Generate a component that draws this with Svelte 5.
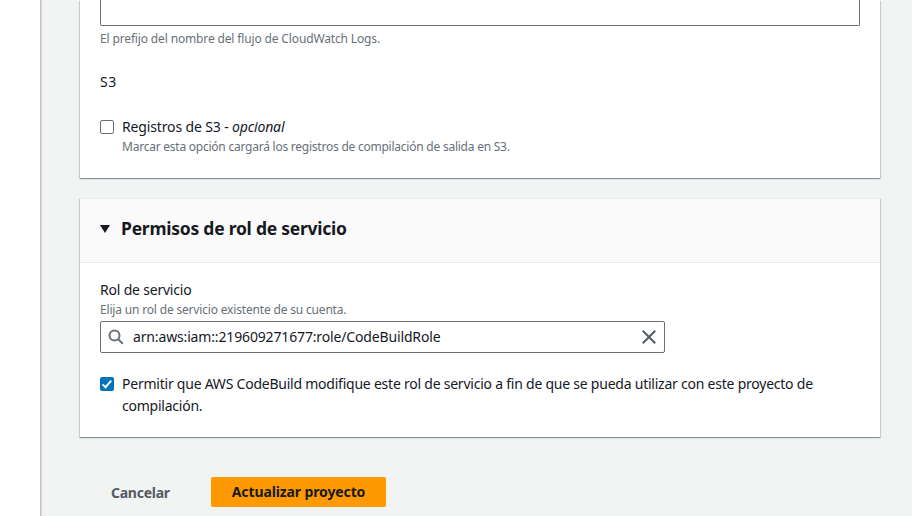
<script>
  let logs = $state(false);
  let allow = $state(true);
  let role = $state('arn:aws:iam::219609271677:role/CodeBuildRole');
</script>

<div class="page">
  <aside></aside>
  <main>
    <section class="card logs">
      <div class="prefix"></div>
      <p class="hint h1"><span>El prefijo del nombre del flujo de CloudWatch Logs.</span></p>
      <h3>S3</h3>
      <label class="option">
        <input type="checkbox" bind:checked={logs} />
        <span class="box" class:on={logs}></span>
        <span class="copy">
          <span class="label l1">Registros de S3 - <em>opcional</em></span>
          <span class="hint h2">Marcar esta opción cargará los registros de compilación de salida en S3.</span>
        </span>
      </label>
    </section>

    <section class="card role">
      <header>
        <svg width="10" height="8" viewBox="0 0 10 8"><path d="M0 0h10L5 8z" fill="#16191f" /></svg>
        <h2>Permisos de rol de servicio</h2>
      </header>
      <div class="body">
        <div class="label l2">Rol de servicio</div>
        <div class="hint h3">Elija un rol de servicio existente de su cuenta.</div>
        <div class="search">
          <svg width="16" height="16" viewBox="0 0 16 16" fill="none" stroke="#687078" stroke-width="2"><circle cx="6.5" cy="6.5" r="5" /><path d="M10.2 10.2l4.6 4.6" /></svg>
          <span class="value">{role}</span>
          <svg width="16" height="16" viewBox="0 0 16 16" fill="none" stroke="#545b64" stroke-width="2"><path d="M1.8 1.8l12.4 12.4M14.2 1.8L1.8 14.2" /></svg>
        </div>
        <label class="option allow">
          <input type="checkbox" bind:checked={allow} />
          <span class="box" class:on={allow}>
            {#if allow}<svg width="14" height="14" viewBox="0 0 14 14" fill="none" stroke="#fff" stroke-width="2"><path d="M2.6 7.4l2.9 2.8L11.2 3.6" /></svg>{/if}
          </span>
          <span class="label l3">Permitir que AWS CodeBuild modifique este rol de servicio a fin de que se pueda utilizar con este proyecto de<br />compilación.</span>
        </label>
      </div>
    </section>

    <div class="actions">
      <button class="link">Cancelar</button>
      <button class="primary">Actualizar proyecto</button>
    </div>
  </main>
</div>

<style>
  :global(body) { background: #f2f3f3; overflow: hidden; }
  .page {
    display: flex; height: 516px; overflow: hidden; box-sizing: border-box;
    font-family: "Noto Sans", "Open Sans", sans-serif; font-size: 14px; line-height: 22px; color: #16191f;
  }
  aside { width: 40px; flex: none; background: #fff; border-right: 1px solid #bec3c4; box-shadow: 1px 0 1px rgba(0, 28, 36, .1); }
  main { width: 800px; flex: none; margin-left: 39px; }
  .card {
    background: #fff; box-sizing: border-box; width: 800px;
    box-shadow: 0 1px 1px 0 rgba(0, 40, 52, .25), 1px 1px 1px 0 rgba(0, 40, 52, .14), -1px 1px 1px 0 rgba(0, 40, 52, .14);
  }
  .logs { height: 178px; padding: 0 20px; }
  .prefix { height: 25px; border: 1px solid #687078; border-top: 0; border-radius: 0 0 2px 2px; }
  p, h2, h3 { margin: 0; }
  .hint { font-size: 12px; line-height: 16px; color: #687078; white-space: nowrap; }
  .h1 { margin-top: 5px; letter-spacing: -.145px; }
  .h2 { letter-spacing: -.235px; position: relative; top: 1px; }
  h3 { font-size: 14px; font-weight: 400; line-height: 22px; margin-top: 24px; letter-spacing: .6px; }
  .option { display: flex; position: relative; margin-top: 23px; }
  .option input { position: absolute; opacity: 0; margin: 0; }
  .box { flex: none; width: 14px; height: 14px; box-sizing: border-box; border: 1px solid #687078; border-radius: 2px; background: #fff; margin: 4px 8px 0 0; }
  .box.on { border: 0; background: #0073bb; }
  .box svg { display: block; }
  .copy { display: flex; flex-direction: column; }
  .label { white-space: nowrap; }
  .l1 { letter-spacing: -.14px; }
  .l2 { letter-spacing: -.2px; }
  .l3 { letter-spacing: -.232px; }
  .role { height: 239px; margin-top: 20px; border-top: 1px solid #eaeded; }
  header { height: 60px; display: flex; align-items: center; gap: 11px; padding: 0 20px 3px; background: #fafafa; border-bottom: 1px solid #eaeded; }
  h2 { font-size: 17.5px; line-height: 22px; font-weight: 700; white-space: nowrap; letter-spacing: -.24px; padding-bottom: 2px; }
  .body { padding: 16px 20px 0; }
  .h3 { margin-top: 1px; letter-spacing: -.175px; }
  .search { width: 565px; height: 32px; margin-top: 3px; box-sizing: border-box; border: 1px solid #687078; border-radius: 2px; display: flex; align-items: center; padding: 0 7px; }
  .value { flex: 1; margin-left: 9px; white-space: nowrap; letter-spacing: -.15px; }
  .search svg { flex: none; }
  .allow { margin-top: 20px; }
  .actions { display: flex; margin-top: 40px; padding-left: 9px; align-items: center; }
  button { font: 700 14px/20px "Noto Sans", "Open Sans", sans-serif; border: 0; height: 30px; padding: 0; border-radius: 2px; white-space: nowrap; }
  .link { width: 122px; text-align: left; padding: 2px 0 0 22px; background: none; color: #545b64; letter-spacing: -.25px; }
  .primary { width: 175px; background: #ff9900; color: #16191f; letter-spacing: -.12px; }
</style>
